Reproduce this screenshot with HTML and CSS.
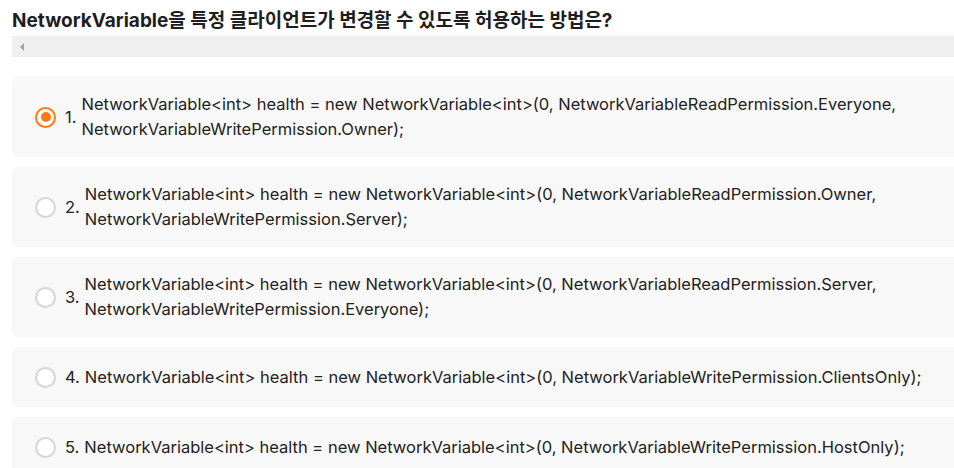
FILE: index.html
```html
<!DOCTYPE html>
<html lang="ko">
<head>
<meta charset="utf-8">
<link rel="stylesheet" href="styles.css">
</head>
<body>
<h1 class="title">NetworkVariable을 특정 클라이언트가 변경할 수 있도록 허용하는 방법은?</h1>
<div class="scrollbar"><span class="arrow"></span></div>
<div class="options">
  <label class="option">
    <span class="radio checked"></span>
    <span class="num">1.</span>
    <span class="text">NetworkVariable&lt;int&gt; health = new NetworkVariable&lt;int&gt;(0, NetworkVariableReadPermission.Everyone, NetworkVariableWritePermission.Owner);</span>
  </label>
  <label class="option">
    <span class="radio"></span>
    <span class="num">2.</span>
    <span class="text">NetworkVariable&lt;int&gt; health = new NetworkVariable&lt;int&gt;(0, NetworkVariableReadPermission.Owner, NetworkVariableWritePermission.Server);</span>
  </label>
  <label class="option">
    <span class="radio"></span>
    <span class="num">3.</span>
    <span class="text">NetworkVariable&lt;int&gt; health = new NetworkVariable&lt;int&gt;(0, NetworkVariableReadPermission.Server, NetworkVariableWritePermission.Everyone);</span>
  </label>
  <label class="option">
    <span class="radio"></span>
    <span class="num">4.</span>
    <span class="text">NetworkVariable&lt;int&gt; health = new NetworkVariable&lt;int&gt;(0, NetworkVariableWritePermission.ClientsOnly);</span>
  </label>
  <label class="option">
    <span class="radio"></span>
    <span class="num">5.</span>
    <span class="text">NetworkVariable&lt;int&gt; health = new NetworkVariable&lt;int&gt;(0, NetworkVariableWritePermission.HostOnly);</span>
  </label>
</div>
</body>
</html>
```
FILE: styles.css
```css
* { box-sizing: border-box; }
html, body { margin: 0; background: #fff; }
body {
  padding: 8px 0 0 12px;
  font-family: Inter, "Noto Sans CJK KR", sans-serif;
  color: #222;
  width: 990px;
}
.title {
  margin: 0;
  font-size: 19px;
  line-height: 26px;
  font-weight: 700;
  color: #1e1e1e;
}
.scrollbar {
  margin-top: 2px;
  height: 21px;
  background: #efefef;
  position: relative;
}
.arrow {
  position: absolute;
  left: 8px;
  top: 7px;
  width: 0;
  height: 0;
  border-top: 4px solid transparent;
  border-bottom: 4px solid transparent;
  border-right: 4px solid #a3a3a3;
}
.options {
  margin-top: 20px;
  display: flex;
  flex-direction: column;
  gap: 10px;
}
.option {
  display: flex;
  align-items: center;
  min-height: 60px;
  padding: 15px 20px 15px 23px;
  background: #f8f8f8;
  border-radius: 6px;
  font-size: 16.5px;
  line-height: 25px;
  color: #222;
}
.radio {
  flex: none;
  width: 21px;
  height: 21px;
  border-radius: 50%;
  border: 2px solid #d6d6d6;
  background: #fff;
  margin-right: 9px;
  display: flex;
  align-items: center;
  justify-content: center;
}
.radio.checked {
  border: 2.5px solid #fd7a16;
}
.radio.checked::after {
  content: "";
  width: 10px;
  height: 10px;
  border-radius: 50%;
  background: #fd7a16;
}
.num {
  flex: none;
  margin-right: 5px;
}
.text { flex: 1; }
```
